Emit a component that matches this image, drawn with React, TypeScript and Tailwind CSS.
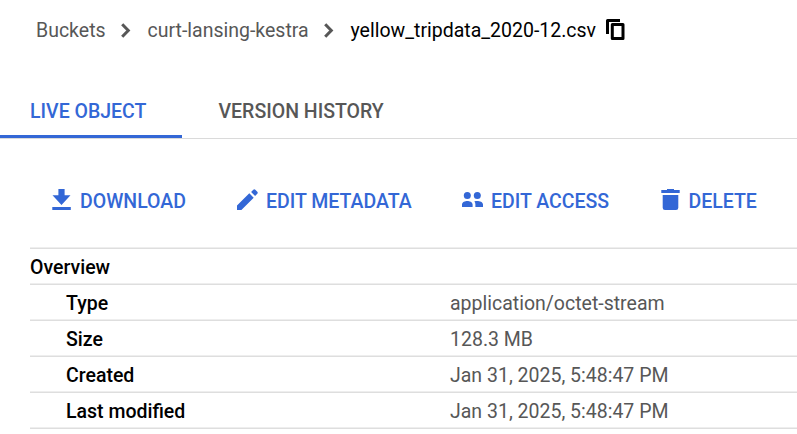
import React from "react";

const rows = [
  ["Type", "application/octet-stream"],
  ["Size", "128.3 MB"],
  ["Created", "Jan 31, 2025, 5:48:47 PM"],
  ["Last modified", "Jan 31, 2025, 5:48:47 PM"],
];

function Chevron() {
  return (
    <svg className="h-[15px] w-[10px]" viewBox="0 0 10 15" fill="none" stroke="currentColor" strokeWidth="3">
      <path d="M1.2 1.2 7.3 7.5l-6.1 6.3" />
    </svg>
  );
}

function CopyIcon() {
  return (
    <svg className="mb-0.5 h-[21px] w-[19px]" viewBox="0 0 19 21" fill="none" stroke="black" strokeWidth="3" strokeLinejoin="round">
      <path d="M1.5 15V1.5H14" />
      <path d="M6.3 5.5H17v14H6.3z" />
    </svg>
  );
}

function DownloadIcon() {
  return (
    <svg className="h-[21px] w-[19px]" viewBox="0 0 19 21" fill="currentColor">
      <path d="M6.4 0h6.2v6.3h5.9L9.5 16 .5 6.3h5.9zM.3 18h18.5v3H.3z" />
    </svg>
  );
}

function EditIcon() {
  return (
    <svg className="size-[21px]" viewBox="0 0 21 21" fill="currentColor">
      <path d="M0 16.6 12.3 4.3l4.4 4.4L4.4 21H0zM14.1 2.9l2.2-2.2q1-.9 2 0l2 2q.9 1 0 2l-2.2 2.2z" />
    </svg>
  );
}

function PeopleIcon() {
  return (
    <svg className="mt-[3px] h-[15px] w-[21px]" viewBox="0 0 21 15" fill="currentColor">
      <circle cx="5.3" cy="3.5" r="3.5" />
      <circle cx="15.3" cy="3.5" r="3.5" />
      <path d="M0 15v-2.4C0 10 3.2 9 5.3 9s5.3 1 5.3 3.6V15zM12.7 9.3C15.5 8.5 21 9.3 21 12.6V15h-7.6v-2.4q0-1.9-1-3.1z" />
    </svg>
  );
}

function TrashIcon() {
  return (
    <svg className="h-[21px] w-[19px]" viewBox="0 0 19 21" fill="currentColor">
      <path d="M6 0h7v1h5.7v3H.3V1H6zM1.7 6h15.6v12.7q0 2.3-2.3 2.3H4q-2.3 0-2.3-2.3z" />
    </svg>
  );
}

export default function App() {
  return (
    <div className="h-[434px] w-[797px] overflow-hidden bg-white font-['Roboto',sans-serif] text-[19.5px] leading-6 text-[#575757]">
      <nav className="flex h-[61px] items-center pl-9 whitespace-nowrap">
        <span className="w-[85px] pt-px">Buckets</span>
        <Chevron />
        <span className="ml-[16.5px] w-[176.5px] pt-px">curt-lansing-kestra</span>
        <Chevron />
        <span className="ml-[16.5px] w-[255.5px] pt-px text-black">yellow_tripdata_2020-12.csv</span>
        <CopyIcon />
      </nav>
      <div className="mt-[17px] flex h-[61px] border-b border-[#dadada] font-medium">
        <div className="h-[60px] w-[182px] border-b-[3px] border-[#3367d6] pt-[22px] pl-[30px] text-[#3367d6]">LIVE OBJECT</div>
        <div className="pt-[22px] pl-[36.5px]">VERSION HISTORY</div>
      </div>
      <div className="flex h-[108px] items-start pt-[50px] pl-[52px] font-medium whitespace-nowrap text-[#3367d6]">
        <button className="flex w-[185px] items-start"><DownloadIcon /><span className="pt-px pl-[9px]">DOWNLOAD</span></button>
        <button className="flex w-[225px] items-start"><EditIcon /><span className="pt-px pl-2">EDIT METADATA</span></button>
        <button className="flex w-[199px] items-start"><PeopleIcon /><span className="pt-px pl-2">EDIT ACCESS</span></button>
        <button className="flex items-start"><TrashIcon /><span className="pt-px pl-[8.5px]">DELETE</span></button>
      </div>
      <div className="ml-[30px] border-t border-[#eeeeee]">
        <div className="flex h-[37px] items-center border-y border-[#dedede] pt-[3px] font-medium text-black shadow-[inset_0_-1px_0_#eeeeee]">Overview</div>
        {rows.map(([k, v]) => (
          <div key={k} className="flex h-9 items-center border-b border-[#dedede] pt-[3px] shadow-[inset_0_-1px_0_#eeeeee]">
            <span className="w-[420px] pl-9 font-medium text-black">{k}</span>
            <span>{v}</span>
          </div>
        ))}
      </div>
    </div>
  );
}
